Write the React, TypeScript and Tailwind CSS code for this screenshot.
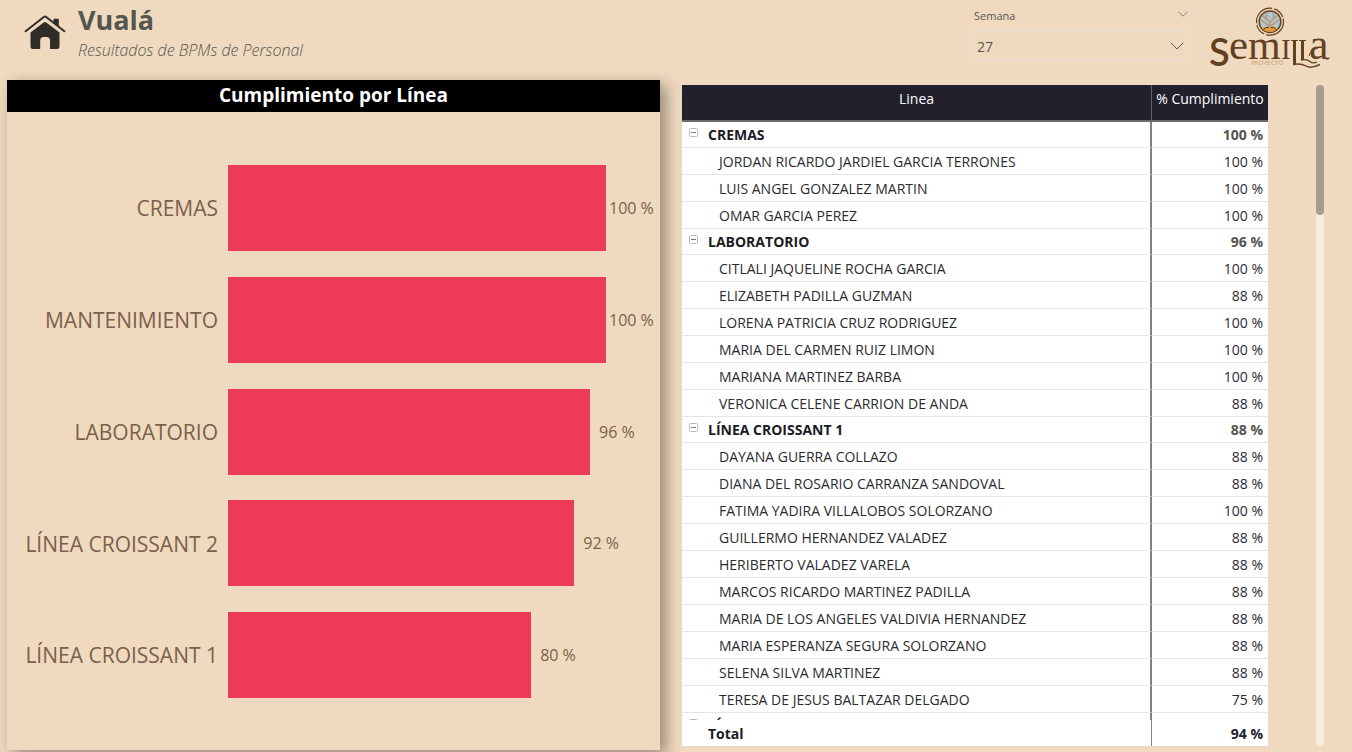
import { useState } from "react";

type Bar = { name: string; value: number; exact: number };
type Person = { name: string; value: number };
type Group = { name: string; value: number; people: Person[] };

const bars: Bar[] = [
  { name: "CREMAS", value: 100, exact: 100 },
  { name: "MANTENIMIENTO", value: 100, exact: 100 },
  { name: "LABORATORIO", value: 96, exact: 95.8 },
  { name: "LÍNEA CROISSANT 2", value: 92, exact: 91.6 },
  { name: "LÍNEA CROISSANT 1", value: 80, exact: 80.2 },
];

const groups: Group[] = [
  {
    name: "CREMAS",
    value: 100,
    people: [
      { name: "JORDAN RICARDO JARDIEL GARCIA TERRONES", value: 100 },
      { name: "LUIS ANGEL GONZALEZ MARTIN", value: 100 },
      { name: "OMAR GARCIA PEREZ", value: 100 },
    ],
  },
  {
    name: "LABORATORIO",
    value: 96,
    people: [
      { name: "CITLALI JAQUELINE ROCHA GARCIA", value: 100 },
      { name: "ELIZABETH PADILLA GUZMAN", value: 88 },
      { name: "LORENA PATRICIA CRUZ RODRIGUEZ", value: 100 },
      { name: "MARIA DEL CARMEN RUIZ LIMON", value: 100 },
      { name: "MARIANA MARTINEZ BARBA", value: 100 },
      { name: "VERONICA CELENE CARRION DE ANDA", value: 88 },
    ],
  },
  {
    name: "LÍNEA CROISSANT 1",
    value: 88,
    people: [
      { name: "DAYANA GUERRA COLLAZO", value: 88 },
      { name: "DIANA DEL ROSARIO CARRANZA SANDOVAL", value: 88 },
      { name: "FATIMA YADIRA VILLALOBOS SOLORZANO", value: 100 },
      { name: "GUILLERMO HERNANDEZ VALADEZ", value: 88 },
      { name: "HERIBERTO VALADEZ VARELA", value: 88 },
      { name: "MARCOS RICARDO MARTINEZ PADILLA", value: 88 },
      { name: "MARIA DE LOS ANGELES VALDIVIA HERNANDEZ", value: 88 },
      { name: "MARIA ESPERANZA SEGURA SOLORZANO", value: 88 },
      { name: "SELENA SILVA MARTINEZ", value: 88 },
      { name: "TERESA DE JESUS BALTAZAR DELGADO", value: 75 },
    ],
  },
  { name: "LÍNEA CROISSANT 2", value: 92, people: [] },
];

function HomeIcon() {
  return (
    <svg viewBox="0 0 42 36" className="h-9 w-[42px]" fill="#302c28" aria-hidden="true">
      <path d="M29.500 4.600 Q29.500 3.800 30.300 3.800 H34 Q34.800 3.800 34.800 4.600 V11.500 L29.500 7.500Z" />
      <path
        d="M1.600 16.200 L19.800 2 Q21 1.200 22.200 2 L40.400 16.200"
        fill="none"
        stroke="#302c28"
        strokeWidth="2"
        strokeLinecap="round"
        strokeLinejoin="round"
      />
      <path d="M19.700 7.500 Q21 6.500 22.300 7.500 L35.500 17.500 V31.500 Q35.500 34 33 34 H26 V25.500 Q26 22 22.700 22 H19.600 Q16.200 22 16.200 25.500 V34 H9 Q6.500 34 6.500 31.500 V17.500Z" />
    </svg>
  );
}

function Chevron({ className }: { className: string }) {
  return (
    <svg viewBox="0 0 14 8" className={className} fill="none" stroke="#5b5b56" aria-hidden="true">
      <path d="M0.800 0.800 L7 7 L13.200 0.800" />
    </svg>
  );
}

function SemillaLogo() {
  return (
    <svg viewBox="0 0 120 64" className="h-16 w-[120px] shrink-0 overflow-visible" role="img" aria-label="Semilla Proyecto">
      <g fill="none">
        <circle cx="60" cy="15.700" r="13.500" stroke="#65401f" strokeWidth="1.200" strokeDasharray="25 2 12 1.500" />
        <circle cx="60" cy="15.700" r="10.800" fill="#a9cbd3" stroke="#65401f" strokeWidth="1.500" />
        <path d="M52 22.500 Q60 18 68 22.500 Q64.500 26 60 26 T52 22.500Z" fill="#e8962e" />
        <path d="M53.500 23.500 Q56 20.500 59 21.500 M66.500 23.500 Q64 20.500 61 21.500" stroke="#65401f" strokeWidth="1" />
        <path
          d="M60 25.500 V16 M60 20.500 L50.500 13.500 M60 20.500 L69.500 13.500 M60 16 L52.500 9.500 M60 16 L67.500 9.500 M56.500 12.500 V6.500 M63.500 12.500 V6.500"
          stroke="#c09a7a"
          strokeWidth="1.700"
        />
      </g>
      <text x="-1" y="60" fontSize="38" fontWeight="600" fill="#65401f" fontFamily="Lato, sans-serif">S</text>
      <g fill="#65401f" fontFamily="'Liberation Serif', serif">
        <text x="19" y="53" fontSize="43">e</text>
        <text x="38" y="53" fontSize="42">m</text>
        <text x="71" y="53" fontSize="29">I</text>
        <text x="99" y="53" fontSize="44">a</text>
      </g>
      <g fill="none" stroke="#65401f">
        <path d="M81 34.500 H88 M89 34.500 H96" strokeWidth="1" />
        <path d="M84.500 34 V58.500 M92.500 34 V54" strokeWidth="3" />
        <path d="M83 58.500 Q91 57 96 60 T110 58.500" strokeWidth="1.400" />
        <path d="M91 54 Q97 53 100 55.500 T107 56" strokeWidth="1.300" />
        <path d="M99 50 Q100 44 108 42" strokeWidth="1" />
        <path d="M116 53 Q118 53.500 119.500 51.500" strokeWidth="1.200" />
      </g>
      <text x="41" y="59" fontSize="6" fill="#c79b72" fontFamily="'DejaVu Sans', sans-serif">
        PROYECTO
      </text>
    </svg>
  );
}

function ToggleIcon({ open }: { open: boolean }) {
  return (
    <svg viewBox="0 0 9 9" className="size-[9px]" fill="none" aria-hidden="true">
      <rect x="0.500" y="0.500" width="8" height="8" rx="1" stroke="#bdbdbd" />
      <path d={open ? "M2 4.500 H7" : "M2 4.500 H7 M4.500 2 V7"} stroke="#777777" />
    </svg>
  );
}

function Header() {
  const [week, setWeek] = useState("27");
  return (
    <header className="flex h-20 shrink-0 items-start justify-between pr-[22px] pl-6">
      <div className="flex">
        <a href="#inicio" aria-label="Inicio" className="mt-[15px] h-9">
          <HomeIcon />
        </a>
        <div className="ml-3">
          <h1 className="mt-1 text-[27px] leading-8 font-bold text-[#54564f]">Vualá</h1>
          <p className="mt-[3px] text-base leading-[22px] font-light text-[#54564f] italic">
            Resultados de BPMs de Personal
          </p>
        </div>
      </div>
      <div className="flex">
        <div className="mr-5 w-[219px] pt-2">
          <div className="flex h-4 items-center justify-between pr-[2px] pl-[3px]">
            <label htmlFor="semana" className="text-[11px] leading-4 text-[#54564f]">
              Semana
            </label>
            <button type="button" aria-label="Opciones de Semana" className="mb-1">
              <Chevron className="h-[6px] w-[10px]" />
            </button>
          </div>
          <div className="relative mt-[6px]">
            <select
              id="semana"
              value={week}
              onChange={(e) => setWeek(e.target.value)}
              className="h-[30px] w-full appearance-none border border-[#e8e1d9] bg-transparent pt-1 pl-[5px] text-sm text-[#54564f]"
            >
              <option>25</option>
              <option>26</option>
              <option>27</option>
            </select>
            <Chevron className="pointer-events-none absolute top-3 right-[6px] h-2 w-[14px]" />
          </div>
        </div>
        <div className="pt-[6px]">
          <SemillaLogo />
        </div>
      </div>
    </header>
  );
}

function BarPanel() {
  return (
    <section className="flex min-h-0 flex-col bg-[#f0dabf] shadow-[6px_5px_15px_rgba(0,0,0,0.38)]">
      <h2 className="h-8 shrink-0 bg-black text-center text-[19px] leading-[31px] font-bold text-white">
        Cumplimiento por Línea
      </h2>
      <div className="flex flex-1 flex-col justify-between pt-[53px] pr-[54px] pb-[52px]">
        {bars.map((bar) => (
          <div key={bar.name} className="flex h-[86px] items-center">
            <span className="w-[221px] shrink-0 pt-[2px] pr-[10px] text-right text-[21px] whitespace-nowrap text-[#7a604c]">
              {bar.name}
            </span>
            <div className="flex h-full min-w-0 flex-1 items-center">
              <div className="h-full shrink-0 bg-[#ec3a57]" style={{ width: `${bar.exact}%` }} />
              <span
                className={`shrink-0 text-base text-[#7a604c] ${bar.value === 100 ? "pl-[3px]" : "pl-[9px]"}`}
              >
                {bar.value} %
              </span>
            </div>
          </div>
        ))}
      </div>
    </section>
  );
}

function GroupRows({ group }: { group: Group }) {
  const [open, setOpen] = useState(true);
  return (
    <>
      <tr className="h-[26px]">
        <th scope="row" className="border-r-2 border-b border-r-[#7d8388] border-b-[#e6e6e6] p-0 text-left font-bold text-[#1c1b1f]">
          <span className="flex">
            <button
              type="button"
              aria-label={`Contraer ${group.name}`}
              onClick={() => setOpen(!open)}
              className="mt-[3px] mr-[10px] ml-[7px] h-[9px]"
            >
              <ToggleIcon open={open} />
            </button>
            {group.name}
          </span>
        </th>
        <td className="border-b border-[#e6e6e6] p-0 pr-[5px] text-right font-bold text-[#54564f]">{group.value} %</td>
      </tr>
      {open &&
        group.people.map((person) => (
          <tr key={person.name} className="h-[27px]">
            <td className="border-r-2 border-b border-r-[#7d8388] border-b-[#e6e6e6] p-0 pt-[2px] pl-[37px] text-[#2b2a2e]">
              {person.name}
            </td>
            <td className="border-b border-[#e6e6e6] p-0 pt-[2px] pr-[5px] text-right text-[#2b2a38]">{person.value} %</td>
          </tr>
        ))}
    </>
  );
}

function Columns() {
  return (
    <colgroup>
      <col />
      <col className="w-[116px]" />
    </colgroup>
  );
}

function DetailTable() {
  return (
    <section className="mt-[5px] mb-1 flex min-h-0 justify-between">
      <div className="mr-12 flex min-w-0 flex-1 flex-col bg-white text-sm leading-5 whitespace-nowrap">
        <div className="min-h-0 flex-1 overflow-y-auto [scrollbar-width:none]">
          <table className="w-full table-fixed border-separate border-spacing-0">
            <Columns />
            <thead className="sticky top-0 z-10">
              <tr className="h-[37px] bg-[#23202e] text-white">
                <th scope="col" className="border-r border-b-2 border-r-[#5e5c66] border-b-[#6c6a70] p-0 pt-1 align-top font-normal">
                  Linea
                </th>
                <th scope="col" className="border-b-2 border-[#6c6a70] p-0 pt-1 align-top font-normal">
                  % Cumplimiento
                </th>
              </tr>
            </thead>
            <tbody>
              {groups.map((group) => (
                <GroupRows key={group.name} group={group} />
              ))}
            </tbody>
          </table>
        </div>
        <table className="w-full shrink-0 table-fixed border-separate border-spacing-0">
          <Columns />
          <tbody>
            <tr className="h-[26px] font-bold">
              <th scope="row" className="border-r border-[#7d8388] p-0 pt-[2px] pl-[26px] text-left text-[#1c1b1f]">
                Total
              </th>
              <td className="p-0 pt-[2px] pr-[5px] text-right text-[#23202e]">94 %</td>
            </tr>
          </tbody>
        </table>
      </div>
      <div className="w-2 rounded-full bg-[#f8ebdf]">
        <div className="h-[130px] rounded-full bg-[#a89b8c]" />
      </div>
    </section>
  );
}

export default function App() {
  return (
    <div className="flex h-screen flex-col overflow-hidden bg-[#f0dabf] font-['Open_Sans','Noto_Sans',sans-serif]">
      <Header />
      <main className="grid min-h-0 flex-1 grid-cols-[653fr_642fr] grid-rows-[minmax(0,1fr)] gap-[22px] pr-7 pb-[2px] pl-[7px]">
        <BarPanel />
        <DetailTable />
      </main>
    </div>
  );
}
